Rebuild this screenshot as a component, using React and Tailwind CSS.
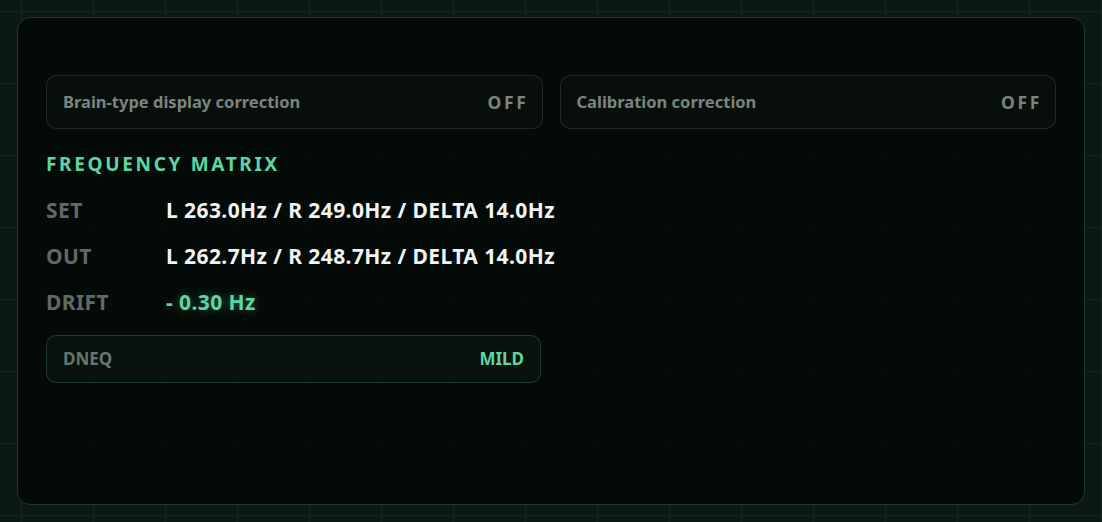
import React from "react";

const font = { fontFamily: "'Noto Sans', 'Open Sans', sans-serif" };

function Toggle({ label, value }) {
  return (
    <div className="flex h-[54px] items-center justify-between rounded-[10px] border border-[rgba(255,255,255,0.11)] bg-[rgba(255,255,255,0.02)] pl-[16px] pr-[13px]">
      <span className="text-[16.5px] font-bold text-[#7a8580]">{label}</span>
      <span className="text-[17.5px] font-bold tracking-[0.15em] text-[#7a8580]">{value}</span>
    </div>
  );
}

function Row({ label, value, accent }) {
  return (
    <div className="flex h-[46px] items-center">
      <span className="w-[120px] text-[21px] font-bold tracking-[0.02em] text-[#5f6a65]">{label}</span>
      <span
        className={
          accent
            ? "text-[21px] font-bold tracking-[0.02em] text-[#5ed6a0] [text-shadow:0_0_10px_rgba(94,214,160,0.45)]"
            : "text-[21px] font-bold tracking-[0.02em] text-[#f2f4f3]"
        }
      >
        {value}
      </span>
    </div>
  );
}

export default function App() {
  return (
    <div
      style={font}
      className="flex h-[522px] w-full flex-col bg-[#0b1913] bg-[linear-gradient(to_right,#13271e_1px,transparent_1px),linear-gradient(to_bottom,#13271e_1px,transparent_1px)] bg-size-[72px_72px] bg-position-[21px_11px] p-[17px]"
    >
      <div className="flex flex-1 flex-col rounded-[13px] border border-[#1d3b2f] bg-[rgba(2,6,5,0.8)] px-[28px] pt-[57px]">
        <div className="grid grid-cols-2 gap-[17px]">
          <Toggle label="Brain-type display correction" value="OFF" />
          <Toggle label="Calibration correction" value="OFF" />
        </div>
        <div className="mt-[23px] text-[19px] font-bold leading-[24px] tracking-[0.14em] text-[#5ed6a0]">
          FREQUENCY MATRIX
        </div>
        <div className="mt-[12px] flex flex-col">
          <Row label="SET" value="L 263.0Hz / R 249.0Hz / DELTA 14.0Hz" />
          <Row label="OUT" value="L 262.7Hz / R 248.7Hz / DELTA 14.0Hz" />
          <Row label="DRIFT" value="- 0.30 Hz" accent />
        </div>
        <div className="mt-[9px] flex h-[48px] w-[495px] items-center justify-between rounded-[10px] border border-[rgba(94,214,160,0.22)] bg-[rgba(94,214,160,0.045)] px-[16px]">
          <span className="text-[17px] font-bold text-[#69756f]">DNEQ</span>
          <span className="text-[17px] font-bold text-[#5ed6a0]">MILD</span>
        </div>
      </div>
    </div>
  );
}
